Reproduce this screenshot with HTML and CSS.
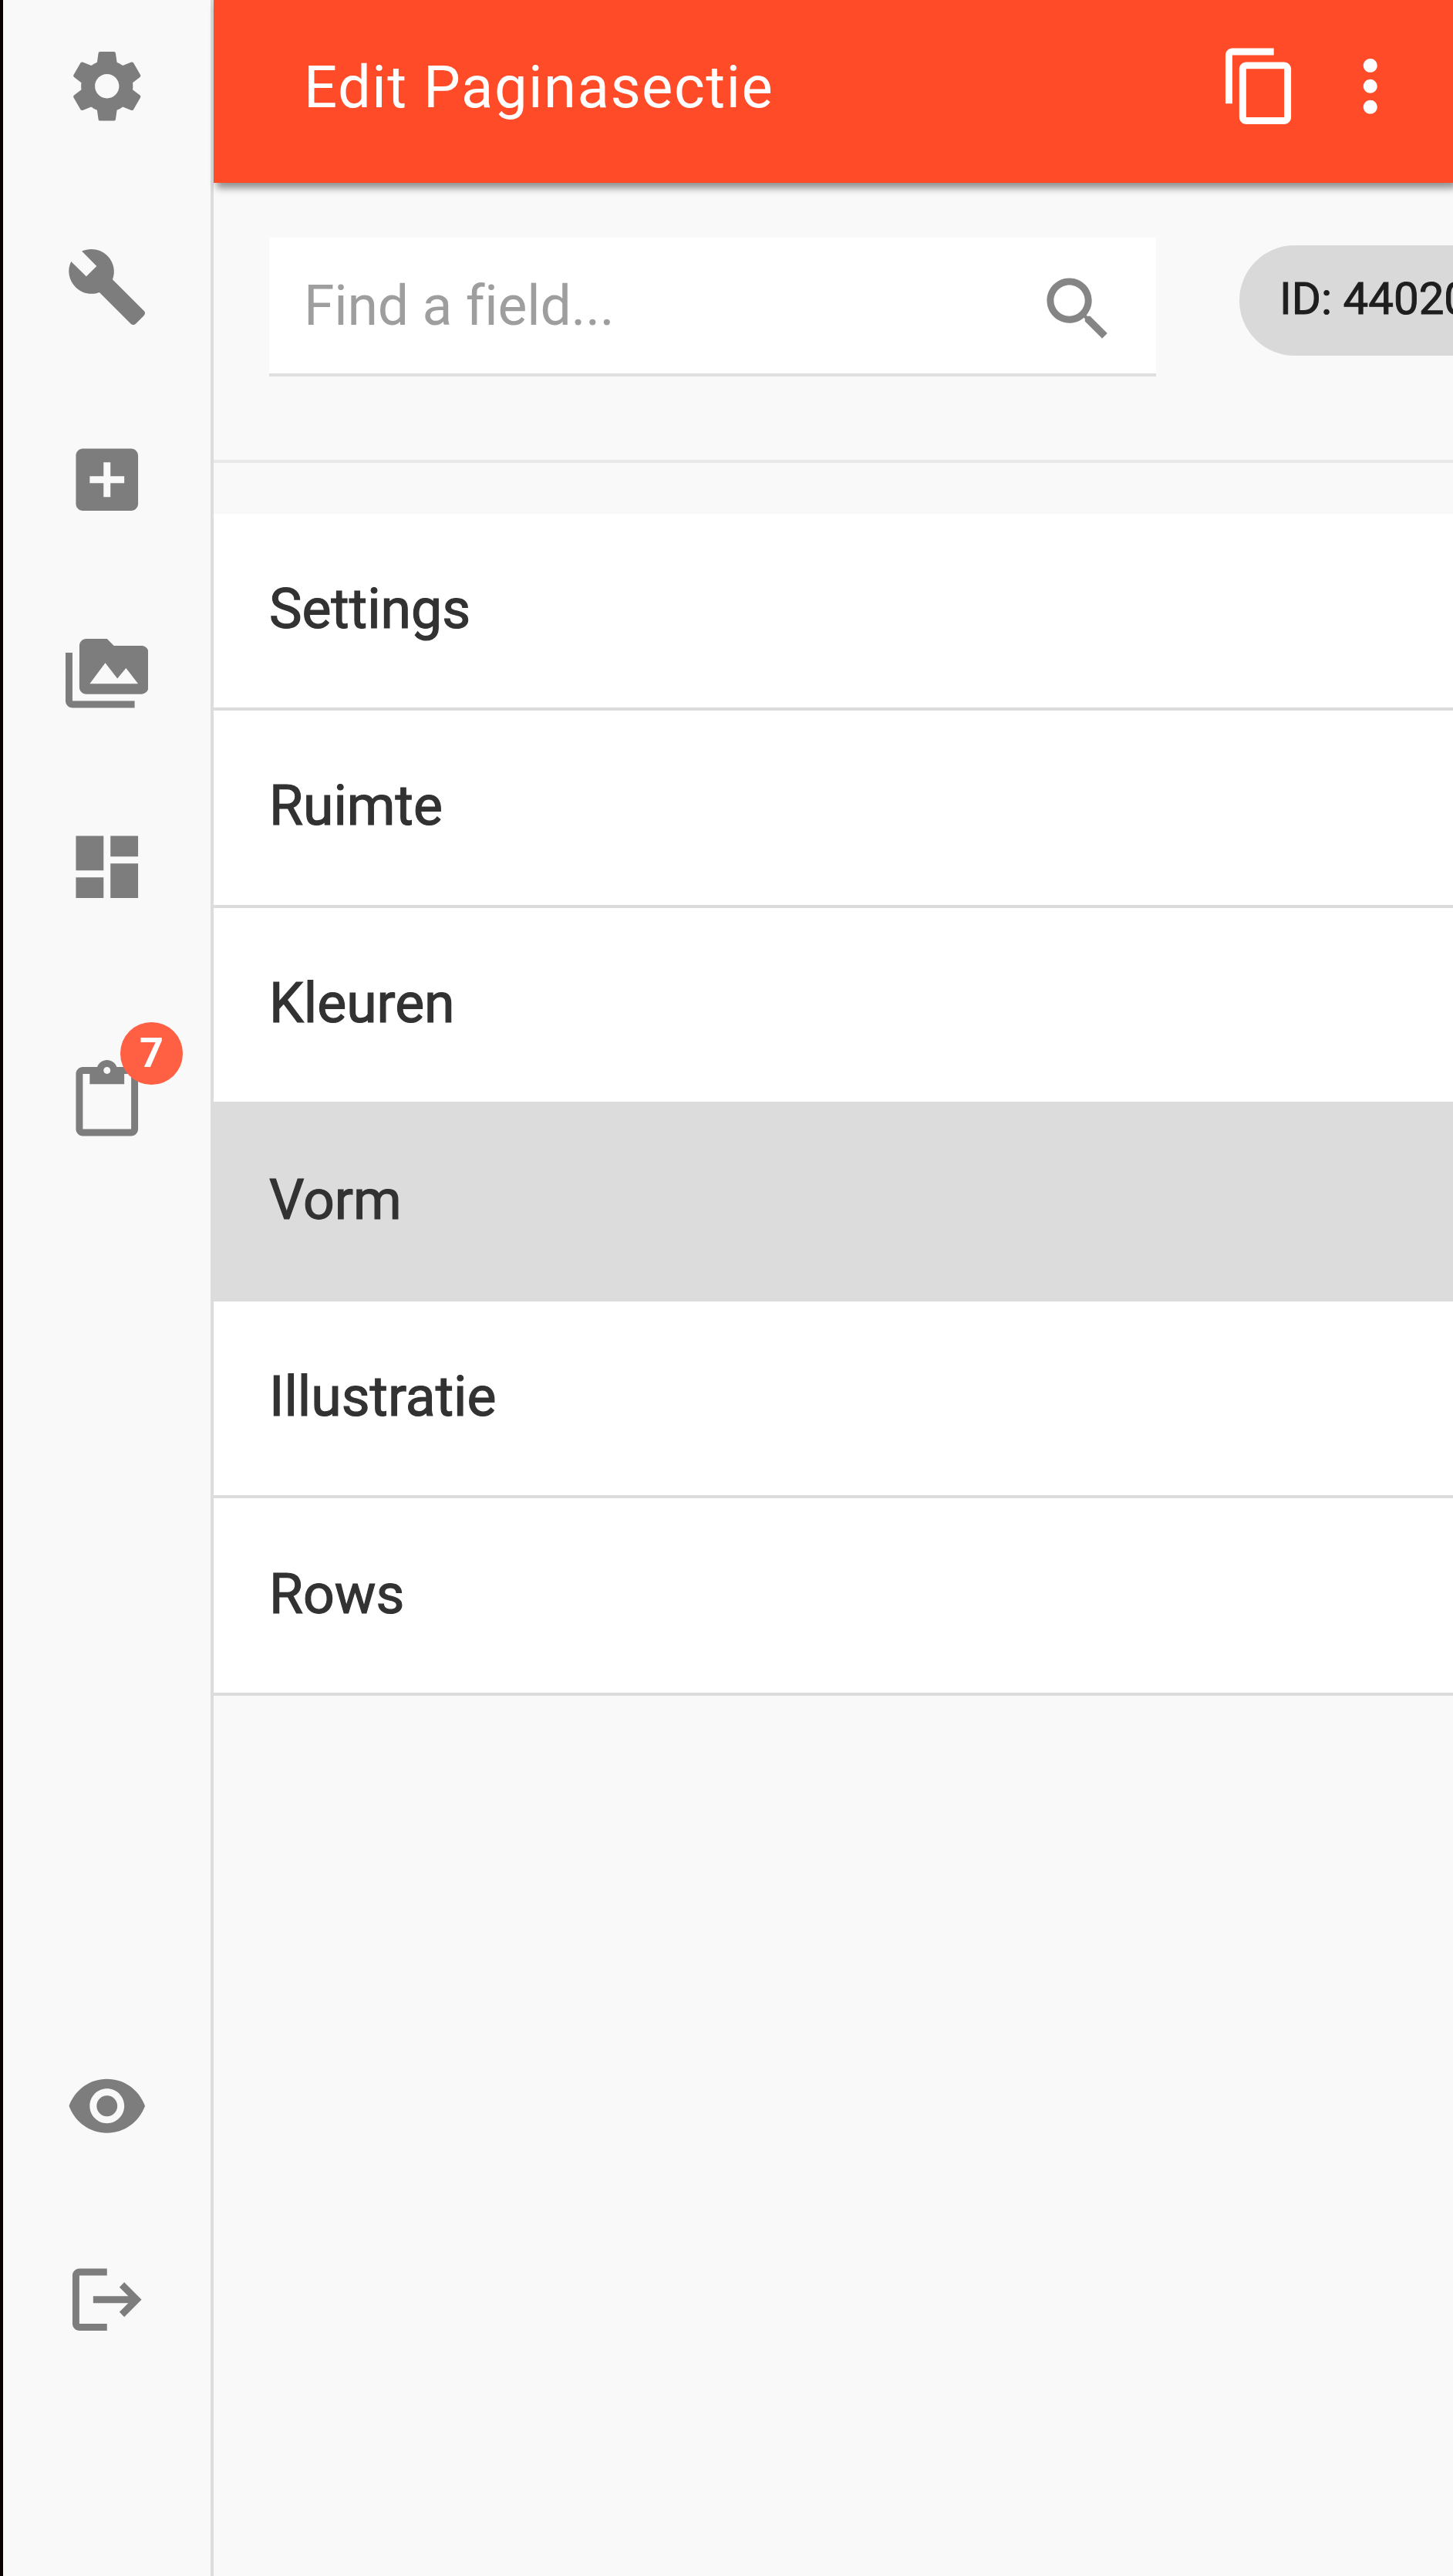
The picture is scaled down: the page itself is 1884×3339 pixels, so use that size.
FILE: index.html
```html
<!DOCTYPE html>
<html lang="nl">
<head>
    <meta charset="UTF-8">
    <meta name="viewport" content="width=device-width, initial-scale=1.0">
    <title>Edit Paginasectie</title>
    <link rel="stylesheet" href="styles.css">
</head>
<body>
    <div class="app">
        <!-- Main menu -->
        <nav class="sidebar">
            <a class="nav-item nav-settings"><svg class="icon" viewBox="0 0 24 24"><path d="M19.43 12.98c.04-.32.07-.64.07-.98s-.03-.66-.07-.98l2.11-1.65c.19-.15.24-.42.12-.64l-2-3.46c-.12-.22-.39-.3-.61-.22l-2.49 1c-.52-.4-1.08-.73-1.69-.98l-.38-2.65C14.46 2.18 14.25 2 14 2h-4c-.25 0-.46.18-.49.42l-.38 2.65c-.61.25-1.17.59-1.69.98l-2.49-1c-.23-.09-.49 0-.61.22l-2 3.46c-.13.22-.07.49.12.64l2.11 1.65c-.04.32-.07.65-.07.98s.03.66.07.98l-2.11 1.65c-.19.15-.24.42-.12.64l2 3.46c.12.22.39.3.61.22l2.49-1c.52.4 1.08.73 1.69.98l.38 2.65c.03.24.24.42.49.42h4c.25 0 .46-.18.49-.42l.38-2.65c.61-.25 1.17-.59 1.69-.98l2.49 1c.23.09.49 0 .61-.22l2-3.46c.12-.22.07-.49-.12-.64l-2.11-1.65zM12 15.5c-1.93 0-3.5-1.57-3.5-3.5s1.57-3.5 3.5-3.5 3.5 1.57 3.5 3.5-1.57 3.5-3.5 3.5z"/></svg></a>
            <a class="nav-item"><svg class="icon" viewBox="0 0 24 24"><path d="M22.7 19l-9.1-9.1c.9-2.3.4-5-1.5-6.9-2-2-5-2.4-7.4-1.3L9 6 6 9 1.6 4.7C.4 7.1.9 10.1 2.9 12.1c1.9 1.9 4.6 2.4 6.9 1.5l9.1 9.1c.4.4 1 .4 1.4 0l2.3-2.3c.5-.4.5-1.1.1-1.4z"/></svg></a>
            <a class="nav-item"><svg class="icon" viewBox="0 0 24 24"><path d="M19 3H5c-1.11 0-2 .9-2 2v14c0 1.1.89 2 2 2h14c1.1 0 2-.9 2-2V5c0-1.1-.9-2-2-2zm-2 10h-4v4h-2v-4H7v-2h4V7h2v4h4v2z"/></svg></a>
            <a class="nav-item"><svg class="icon" viewBox="0 0 24 24"><path d="M2 6H0v5h.01L0 20c0 1.1.9 2 2 2h18v-2H2V6zm20-2h-8l-2-2H6c-1.1 0-1.99.9-1.99 2L4 16c0 1.1.9 2 2 2h16c1.1 0 2-.9 2-2V6c0-1.1-.9-2-2-2zM7 15l4.5-6 3.5 4.51 2.5-3.01L21 15H7z"/></svg></a>
            <a class="nav-item"><svg class="icon" viewBox="0 0 24 24"><path d="M3 13h8V3H3v10zm0 8h8v-6H3v6zm10 0h8V11h-8v10zm0-18v6h8V3h-8z"/></svg></a>
            <a class="nav-item nav-clipboard">
                <svg class="icon" viewBox="0 0 24 24"><path d="M19 2h-4.18C14.4.84 13.3 0 12 0c-1.3 0-2.4.84-2.82 2H5c-1.1 0-2 .9-2 2v16c0 1.1.9 2 2 2h14c1.1 0 2-.9 2-2V4c0-1.1-.9-2-2-2zm-7 0c.55 0 1 .45 1 1s-.45 1-1 1-1-.45-1-1 .45-1 1-1zm7 18H5V4h2v3h10V4h2v16z"/></svg>
                <span class="badge">7</span>
            </a>

            <div class="nav-bottom">
                <a class="nav-item"><svg class="icon" viewBox="0 0 24 24"><path d="M12 4.2C7 4.2 2.73 7.3 1 12c1.73 4.7 6 7.8 11 7.8s9.27-3.1 11-7.8c-1.73-4.7-6-7.8-11-7.8zM12 17c-2.76 0-5-2.24-5-5s2.24-5 5-5 5 2.24 5 5-2.24 5-5 5zm0-8c-1.66 0-3 1.34-3 3s1.34 3 3 3 3-1.34 3-3-1.34-3-3-3z"/></svg></a>
                <a class="nav-item"><svg class="icon" viewBox="0 0 24 24"><path d="M4 3h8v2H4v14h8v2H4c-1.1 0-2-.9-2-2V5c0-1.1.9-2 2-2zm13 4l5 5-5 5-1.41-1.41L18.17 13H8v-2h10.17l-2.58-2.59L17 7z"/></svg></a>
            </div>
        </nav>

        <main class="content">
            <header class="topbar">
                <h1 class="title">Edit Paginasectie</h1>
                <svg class="icon" viewBox="0 0 24 24"><path d="M16 1H4c-1.1 0-2 .9-2 2v14h2V3h12V1zm3 4H8c-1.1 0-2 .9-2 2v14c0 1.1.9 2 2 2h11c1.1 0 2-.9 2-2V7c0-1.1-.9-2-2-2zm0 16H8V7h11v14z"/></svg>
                <svg class="icon" viewBox="0 0 24 24"><path d="M12 8c1.1 0 2-.9 2-2s-.9-2-2-2-2 .9-2 2 .9 2 2 2zm0 2c-1.1 0-2 .9-2 2s.9 2 2 2 2-.9 2-2-.9-2-2-2zm0 6c-1.1 0-2 .9-2 2s.9 2 2 2 2-.9 2-2-.9-2-2-2z"/></svg>
            </header>

            <!-- Field search -->
            <div class="toolbar">
                <div class="search">
                    <span class="placeholder">Find a field...</span>
                    <svg class="icon" viewBox="0 0 24 24"><path d="M15.5 14h-.79l-.28-.27C15.41 12.59 16 11.11 16 9.5 16 5.91 13.09 3 9.5 3S3 5.91 3 9.5 5.91 16 9.5 16c1.61 0 3.09-.59 4.23-1.57l.27.28v.79l5 4.99L20.49 19l-4.99-5zm-6 0C7.01 14 5 11.99 5 9.5S7.01 5 9.5 5 14 7.01 14 9.5 11.99 14 9.5 14z"/></svg>
                </div>
                <span class="chip">ID: 44020</span>
            </div>

            <!-- Sections -->
            <ul class="sections">
                <li>Settings</li>
                <li>Ruimte</li>
                <li>Kleuren</li>
                <li class="active">Vorm</li>
                <li>Illustratie</li>
                <li>Rows</li>
            </ul>
        </main>
    </div>
</body>
</html>
```

FILE: styles.css
```css
* {
    box-sizing: border-box;
}
body {
    margin: 0;
    font-family: Roboto, sans-serif;
    font-size: 71.5px;
    background-color: #f9f9f9;
    color: #323232;
}
.app {
    display: flex;
    height: 3339px;
    overflow: hidden;
}
.icon {
    display: block;
    width: 107.5px;
    height: 107.5px;
    flex: none;
    fill: currentColor;
}

/* Sidebar */
.sidebar {
    display: flex;
    flex-direction: column;
    align-items: center;
    gap: 143.2px;
    flex: none;
    width: 277px;
    padding: 58px 0 304.5px;
    border-left: 4px solid #070200;
    border-right: 4px solid #dcdcdc;
    color: #7d7d7d;
}
.nav-item {
    position: relative;
}
.nav-settings {
    margin-bottom: 9px;
}
.nav-clipboard {
    margin-top: 53.5px;
}
.badge {
    position: absolute;
    top: -48.5px;
    left: 71.5px;
    width: 80.5px;
    height: 80.5px;
    border-radius: 50%;
    background-color: #ff6044;
    color: #fff;
    font-size: 54px;
    font-weight: 700;
    line-height: 80px;
    text-align: center;
}
.nav-bottom {
    display: flex;
    flex-direction: column;
    gap: 143.2px;
    margin-top: auto;
}

/* Header */
.content {
    flex: 1;
    min-width: 0;
}
.topbar {
    display: flex;
    align-items: center;
    gap: 36px;
    height: 237px;
    padding: 0 53.5px 13px 117px;
    background-color: #ff4b27;
    color: #fff;
    box-shadow: 4px 7px 9px rgba(0, 0, 0, 0.42);
}
.title {
    flex: 1;
    margin: 0;
    padding-top: 2px;
    font-size: 76px;
    font-weight: 400;
    letter-spacing: 1.5px;
}

.toolbar {
    display: flex;
    align-items: flex-start;
    gap: 108px;
    height: 363px;
    padding: 71px 0 0 72px;
    border-bottom: 4px solid #e9e9e9;
}
.search {
    display: flex;
    align-items: center;
    justify-content: space-between;
    flex: none;
    width: 1150px;
    height: 180px;
    padding: 0 48px 0 45px;
    background-color: #fff;
    border-bottom: 4px solid #dfdfdf;
}
.placeholder {
    color: #9e9e9e;
    letter-spacing: -0.2px;
}
.search .icon {
    margin-top: 10px;
    color: #858585;
}
.chip {
    flex: none;
    width: 420px;
    height: 143px;
    margin-top: 10px;
    padding-left: 52px;
    border-radius: 72px;
    background-color: #d9d9d9;
    color: #1e1e1e;
    font-size: 58.2px;
    line-height: 138px;
    -webkit-text-stroke: 1px;
}

/* Section list */
.sections {
    margin: 66px 0 0;
    padding: 0;
    list-style: none;
}
.sections li {
    display: flex;
    align-items: center;
    height: 255.3px;
    padding: 0 72px 4px;
    background-color: #fff;
    border-bottom: 4px solid #dcdcdc;
    -webkit-text-stroke: 1.2px;
}
.sections .active {
    background-color: #dcdcdc;
}
```
